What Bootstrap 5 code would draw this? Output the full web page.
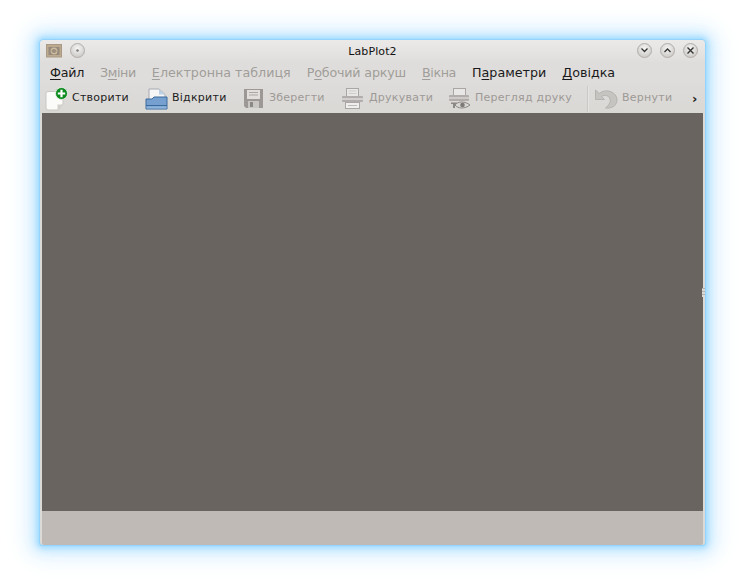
<!DOCTYPE html>
<html lang="uk"><head><meta charset="utf-8"><title>LabPlot2</title>
<link href="https://cdn.jsdelivr.net/npm/bootstrap@5.3.0/dist/css/bootstrap.min.css" rel="stylesheet">
<style>
html,body{height:100%;background:#fff;margin:0;overflow:hidden}
body{font-family:"DejaVu Sans",sans-serif;padding:40px}
.kwin{width:665px;height:505px;border-radius:4px 4px 3px 3px;background:#dcdad7;box-shadow:0 0 1px 1px #8fd3ff,0 0 5px 3px #a3dcff,0 0 12px 6px #c4e8ff,0 0 22px 10px #e2f3ff,0 0 34px 12px #f4faff}
.titlebar{height:22px;background:linear-gradient(#eceae8,#e0dedc);border-radius:4px 4px 0 0;position:relative;padding:0 6px}
.wtitle{font-size:11px;color:#111;line-height:23px;text-align:center;width:100%;letter-spacing:.1px}
.tb-left{position:absolute;left:6px;top:3px}
.tb-right{position:absolute;right:7px;top:3px}
.orb{width:15px;height:15px;border-radius:50%;background:radial-gradient(circle at 50% 35%,#f6f5f4,#c4c1be);border:1px solid #b0adaa;display:flex;align-items:center;justify-content:center}
.menubar{height:22px;padding-left:10px;font-size:12.7px;line-height:21px;color:#1a1a1a;background:#dfdddb}
.menubar span.it{margin-right:16px}
.menubar .off{color:#a09d9a}
.menubar u{text-underline-offset:2px}
.menubar span.t1{letter-spacing:-.25px}
.menubar span.t2{letter-spacing:-.4px}
.menubar span.t3{letter-spacing:-.18px}
.toolbar{height:29px;background:linear-gradient(#dedcda,#dad8d5);font-size:11px;letter-spacing:.25px;color:#1c1c1c;padding-left:5px;position:relative}
.tool{display:flex;align-items:center;gap:4px;flex:none}
.tool.off{color:#9c9996}
.sep{width:2px;height:26px;margin-right:6px;background:linear-gradient(90deg,#bdbbb8,#f2f1ef)}
.chev{font-size:13px;font-weight:700;margin-left:5px;color:#222}
.ws{background:#696460;margin:0 2px;height:398px}
.sbar{height:34px;margin:0 2px;background:#bfbab5;border-radius:0 0 2px 2px}
.w-a{width:100px}.w-b{width:98px}.w-c{width:98px}.w-d{width:107px}.w-e{width:139px}.w-f{width:92px}
.grip{position:absolute;left:702px;top:288px;width:3px;height:9px;background:repeating-linear-gradient(#b3b1ae 0 1px,#dcdad7 1px 3px)}
</style></head>
<body>
<div class="kwin d-flex flex-column">
 <div class="titlebar">
  <div class="tb-left d-flex align-items-center gap-2">
   <svg width="16" height="14" viewBox="0 0 16 14"><rect x=".5" y=".5" width="15" height="12.500" fill="#bca98e" stroke="#a89a84"/><rect x="2.500" y="3" width="11" height="8" fill="#93897c"/><circle cx="8" cy="7" r="2.800" fill="none" stroke="#cdbb9f" stroke-width="1.400"/><path d="M5 7H11" stroke="#a6967f"/></svg>
   <div class="orb"><svg width="3" height="3"><circle cx="1.500" cy="1.500" r="1.200" fill="#777"/></svg></div>
  </div>
  <div class="wtitle">LabPlot2</div>
  <div class="tb-right d-flex gap-2">
   <div class="orb"><svg width="9" height="7" viewBox="0 0 9 7"><path d="M1.500 1.500 4.500 4.500 7.500 1.500" fill="none" stroke="#333" stroke-width="1.300"/></svg></div>
   <div class="orb"><svg width="9" height="7" viewBox="0 0 9 7"><path d="M1.500 5 4.500 2 7.500 5" fill="none" stroke="#333" stroke-width="1.300"/></svg></div>
   <div class="orb"><svg width="9" height="9" viewBox="0 0 9 9"><path d="M1.500 1.500 7.500 7.500M7.500 1.500 1.500 7.500" fill="none" stroke="#333" stroke-width="1.400"/></svg></div>
  </div>
 </div>
 <div class="menubar d-flex">
  <span class="it t1"><u>Ф</u>айл</span><span class="it off t2">З<u>м</u>іни</span><span class="it off"><u>Е</u>лектронна таблиця</span><span class="it off t3">Р<u>о</u>бочий аркуш</span><span class="it off t2"><u>В</u>ікна</span><span class="it">П<u>а</u>раметри</span><span class="it"><u>Д</u>овідка</span>
 </div>
 <div class="toolbar d-flex align-items-center">
  <div class="tool w-a"><svg width="23" height="24" viewBox="0 0 23 24"><path d="M1 6.500Q1 4.500 3 4.500H12L18 10V17L13 23H3Q1 23 1 21Z" fill="#fbfbf9" stroke="#c9c7c3"/><path d="M12.500 23V17.500H18Z" fill="#d2d0cc"/><circle cx="16.500" cy="6.500" r="6" fill="#0b8a1e" stroke="#f4f4f2" stroke-width=".8"/><path d="M16.500 2.800V10.200M12.800 6.500H20.200" stroke="#fff" stroke-width="2.200"/></svg><span>Створити</span></div>
  <div class="tool w-b"><svg width="23" height="22" viewBox="0 0 23 22"><path d="M4 1H14L20 6.500V14H4Z" fill="#f6f6f6" stroke="#a3a8b0"/><path d="M14 1V6.500H20Z" fill="#bcd0e6"/><path d="M1 11H7L9 9H22V21H1Z" fill="#75a0cf" stroke="#3d6a9c"/><path d="M1 17.500H22" stroke="#3d6a9c"/><path d="M1.500 18.500H21.500V20.500H1.500Z" fill="#8fb4da"/></svg><span>Відкрити</span></div>
  <div class="tool off w-c"><svg width="22" height="21" viewBox="0 0 22 21"><path d="M1 1H20V20H3L1 18Z" fill="#9b9895"/><rect x="4" y="2" width="13" height="9" fill="#e1dfdc"/><path d="M6 4.500H15M6 7H15" stroke="#aaa7a4"/><rect x="5" y="13" width="11" height="7" fill="#c9c7c4"/><rect x="7" y="14" width="3" height="5" fill="#8b8885"/></svg><span>Зберегти</span></div>
  <div class="tool off w-d"><svg width="24" height="23" viewBox="0 0 24 23"><rect x="5.500" y="1.500" width="12" height="8" fill="#e8e7e5" stroke="#a9a6a3"/><path d="M7.500 4H15.500M7.500 6.500H15.500" stroke="#cfcdca"/><rect x="1" y="9" width="21" height="6" rx="1" fill="#b0adaa"/><path d="M1 12H22" stroke="#dedcda" stroke-width="1.500"/><rect x="4.500" y="15.500" width="14" height="6" fill="#efeeec" stroke="#a9a6a3"/><path d="M7 18.500H16" stroke="#bdbbb8"/></svg><span>Друкувати</span></div>
  <div class="tool off w-e"><svg width="23" height="23" viewBox="0 0 23 23"><rect x="5.500" y="1.500" width="12" height="7" fill="#e8e7e5" stroke="#a9a6a3"/><rect x="1" y="8" width="20" height="6" rx="1" fill="#b0adaa"/><path d="M1 11H21" stroke="#dedcda" stroke-width="1.300"/><path d="M3 15.500H9V17H7V21H5V17H3Z" fill="#8b8885"/><path d="M7 18C10 14 17 14 22 18 17 22 10 22 7 18Z" fill="#dad8d5" stroke="#8b8885"/><circle cx="14.500" cy="18" r="2.300" fill="#7c7976"/></svg><span>Перегляд друку</span></div>
  <div class="sep"></div>
  <div class="tool off w-f"><svg width="23" height="20" viewBox="0 0 23 20"><path d="M.500 1V10.500H9.500L6.500 7.500C10 5.500 14 6.500 15 10 15.800 13 14 16.500 10.500 19 18 20 22.500 15.500 22 10 21 2.500 10.500-1 4.300 4.500Z" fill="#c6c4c1" stroke="#aeaca9" stroke-width=".8"/></svg><span>Вернути</span></div>
  <span class="chev">›</span>
 </div>
 <div class="ws"></div>
 <div class="sbar"></div>
</div>
<div class="grip"></div>
</body></html>
